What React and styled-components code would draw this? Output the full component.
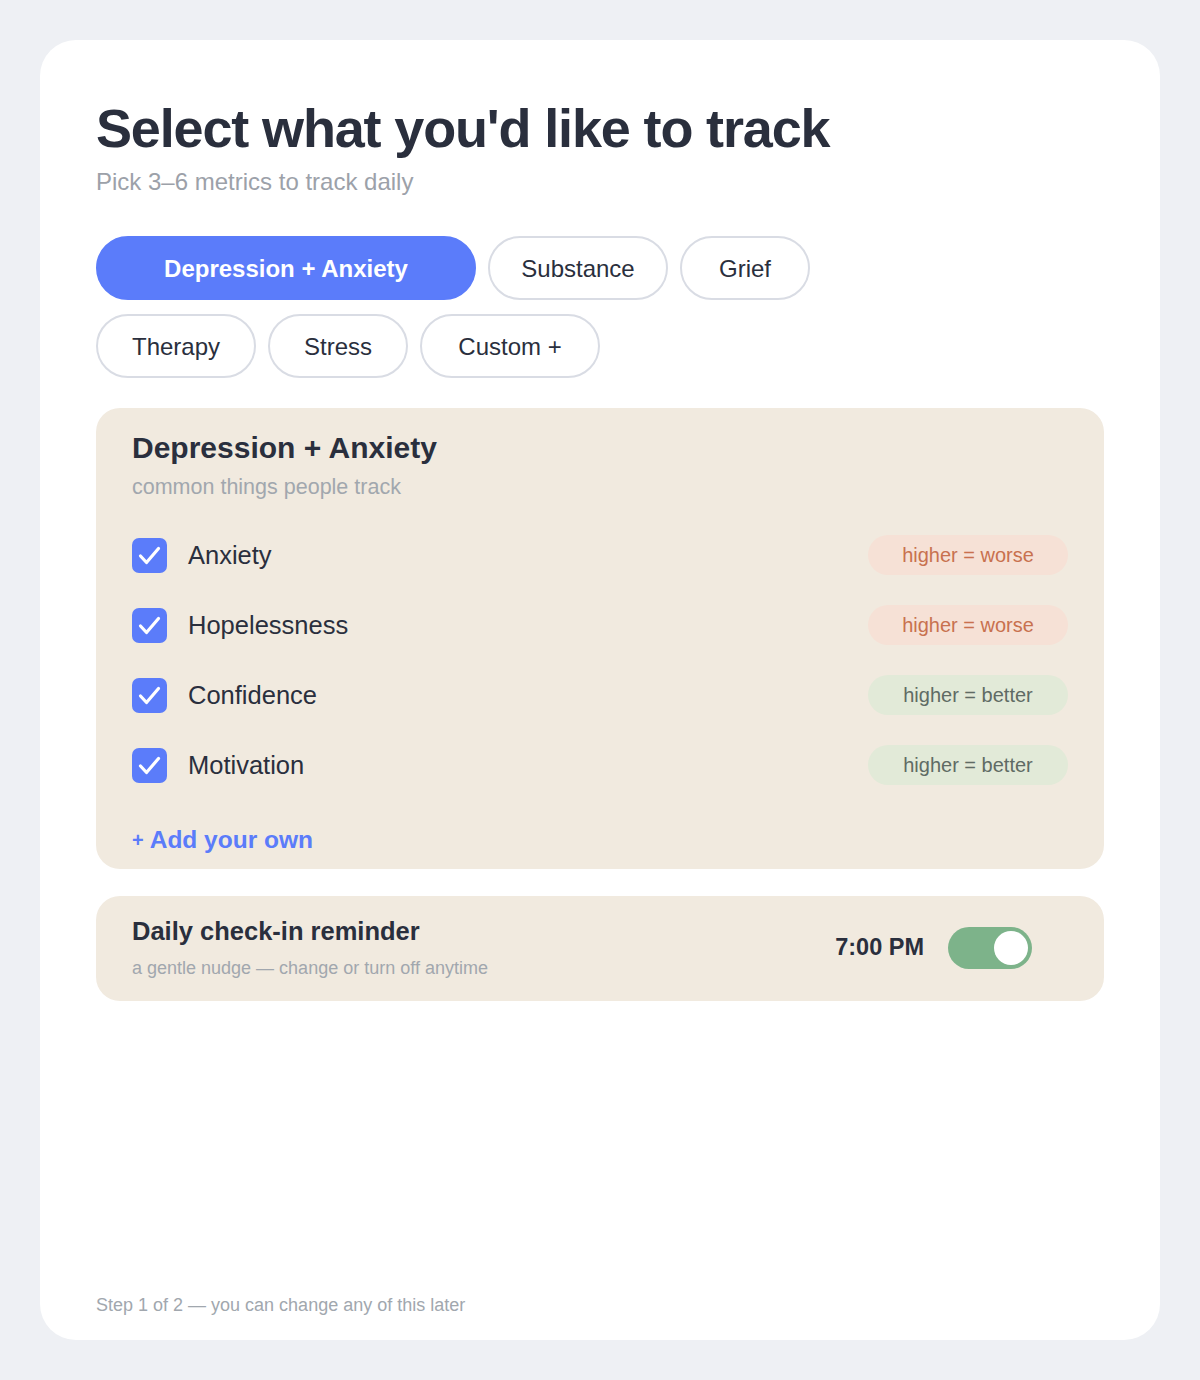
import styled, { createGlobalStyle } from 'styled-components'

const GlobalStyle = createGlobalStyle`
  html, body {
    margin: 0;
    padding: 0;
    background: #eef0f4;
  }
  body {
    font-family: 'Liberation Sans', Arial, sans-serif;
    color: #2a2f3d;
  }
`

const Page = styled.div`
  padding: 40px;
`

const Card = styled.div`
  background: #fff;
  border-radius: 36px;
  height: 1300px;
  box-sizing: border-box;
  padding: 56px 56px 24px;
  display: flex;
  flex-direction: column;
`

const Title = styled.h1`
  margin: 0;
  font-size: 54px;
  font-weight: 700;
  line-height: 64px;
  letter-spacing: -1.15px;
  color: #2a2f3d;
`

const Subtitle = styled.div`
  margin-top: 7px;
  font-size: 24px;
  line-height: 30px;
  color: #9ca1a9;
`

const ChipWrap = styled.div`
  display: flex;
  flex-wrap: wrap;
  gap: 14px 12px;
  margin-top: 39px;
  max-width: 740px;
`

const Chip = styled.button`
  height: 64px;
  width: ${(p) => p.$w}px;
  box-sizing: border-box;
  border-radius: 32px;
  font-family: inherit;
  font-size: 24px;
  font-weight: ${(p) => (p.$active ? 700 : 400)};
  color: ${(p) => (p.$active ? '#fff' : '#2a2f3d')};
  background: ${(p) => (p.$active ? '#5b7cfa' : '#fff')};
  border: 2px solid ${(p) => (p.$active ? '#5b7cfa' : '#d9dce4')};
  cursor: pointer;
  padding: 2px 0 0;
`

const Panel = styled.section`
  background: #f1eadf;
  border-radius: 24px;
  padding: ${(p) => p.$pad};
  margin-top: ${(p) => p.$mt}px;
`

const PanelTitle = styled.h2`
  margin: 0;
  font-size: 30px;
  line-height: 36px;
  font-weight: 700;
  color: #2a2f3d;
`

const PanelSub = styled.div`
  margin-top: 8px;
  font-size: 21.5px;
  line-height: 26px;
  color: #a1a7ae;
`

const List = styled.div`
  display: flex;
  flex-direction: column;
  gap: 30px;
  margin-top: 35px;
`

const Row = styled.label`
  display: flex;
  align-items: center;
  height: 40px;
`

const Check = styled.span`
  width: 35px;
  height: 35px;
  border-radius: 7px;
  background: #5b7cfa;
  display: flex;
  align-items: center;
  justify-content: center;
  flex-shrink: 0;
`

const Label = styled.span`
  margin-left: 21px;
  font-size: 25.5px;
  color: #2a2f3d;
  flex: 1;
`

const Badge = styled.span`
  width: 200px;
  height: 40px;
  border-radius: 20px;
  display: flex;
  align-items: center;
  justify-content: center;
  font-size: 20px;
  background: ${(p) => (p.$tone === 'worse' ? '#f6e1d6' : '#e2ead8')};
  color: ${(p) => (p.$tone === 'worse' ? '#c8714f' : '#5f6b64')};
`

const AddOwn = styled.button`
  margin-top: 41px;
  padding: 0;
  border: 0;
  background: none;
  font-family: inherit;
  font-size: 24.5px;
  font-weight: 700;
  color: #5b7cfa;
  line-height: 28px;
  cursor: pointer;
  display: flex;
  align-items: center;
  gap: 6px;
`

const Plus = styled.span`
  font-size: 20px;
`

const ReminderRow = styled.div`
  display: flex;
  align-items: center;
  justify-content: space-between;
`

const ReminderTitle = styled.div`
  font-size: 25.5px;
  line-height: 30px;
  font-weight: 700;
  color: #2a2f3d;
`

const ReminderSub = styled.div`
  margin-top: 11px;
  font-size: 18px;
  line-height: 22px;
  color: #a1a7ae;
`

const TimeGroup = styled.div`
  display: flex;
  align-items: center;
  gap: 24px;
  margin-right: 36px;
`

const Time = styled.span`
  font-size: 23.5px;
  font-weight: 700;
  color: #2a2f3d;
`

const Toggle = styled.span`
  width: 84px;
  height: 42px;
  border-radius: 21px;
  background: #7db38a;
  display: flex;
  align-items: center;
  justify-content: flex-end;
  padding: 0 4px;
  box-sizing: border-box;
`

const Knob = styled.span`
  width: 34px;
  height: 34px;
  border-radius: 50%;
  background: #fff;
`

const Footer = styled.div`
  margin-top: auto;
  font-size: 18px;
  line-height: 22px;
  color: #a1a7ae;
`

const chips = [
  { name: 'Depression + Anxiety', w: 380, active: true },
  { name: 'Substance', w: 180 },
  { name: 'Grief', w: 130 },
  { name: 'Therapy', w: 160 },
  { name: 'Stress', w: 140 },
  { name: 'Custom +', w: 180 },
]

const metrics = [
  { name: 'Anxiety', tone: 'worse' },
  { name: 'Hopelessness', tone: 'worse' },
  { name: 'Confidence', tone: 'better' },
  { name: 'Motivation', tone: 'better' },
]

const CheckIcon = () => (
  <svg width="35" height="35" viewBox="0 0 35 35" fill="none">
    <path
      d="M8.5 18l6 6.5L26.5 10.5"
      stroke="#fff"
      strokeWidth="3.2"
      strokeLinecap="round"
      strokeLinejoin="round"
    />
  </svg>
)

export default function App() {
  return (
    <Page>
      <GlobalStyle />
      <Card>
        <Title>Select what you'd like to track</Title>
        <Subtitle>Pick 3–6 metrics to track daily</Subtitle>

        <ChipWrap>
          {chips.map((c) => (
            <Chip key={c.name} $w={c.w} $active={c.active}>
              {c.name}
            </Chip>
          ))}
        </ChipWrap>

        <Panel $pad="22px 36px 15px" $mt={30}>
          <PanelTitle>Depression + Anxiety</PanelTitle>
          <PanelSub>common things people track</PanelSub>
          <List>
            {metrics.map((m) => (
              <Row key={m.name}>
                <Check>
                  <CheckIcon />
                </Check>
                <Label>{m.name}</Label>
                <Badge $tone={m.tone}>
                  higher = {m.tone}
                </Badge>
              </Row>
            ))}
          </List>
          <AddOwn>
            <Plus>+</Plus> Add your own
          </AddOwn>
        </Panel>

        <Panel $pad="20px 36px 22px" $mt={27}>
          <ReminderRow>
            <div>
              <ReminderTitle>Daily check-in reminder</ReminderTitle>
              <ReminderSub>a gentle nudge — change or turn off anytime</ReminderSub>
            </div>
            <TimeGroup>
              <Time>7:00 PM</Time>
              <Toggle>
                <Knob />
              </Toggle>
            </TimeGroup>
          </ReminderRow>
        </Panel>

        <Footer>Step 1 of 2 — you can change any of this later</Footer>
      </Card>
    </Page>
  )
}
